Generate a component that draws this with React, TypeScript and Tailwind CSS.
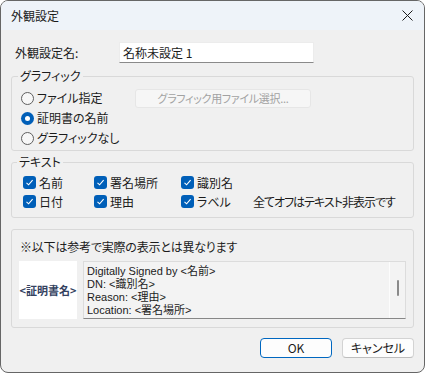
import React from "react";

/* Windows 11 style dialog: appearance settings for a signature stamp. */

const Radio = ({ checked, label }: { checked?: boolean; label: string }) => (
  <label className="flex h-[20px] items-center gap-[3px]">
    {checked ? (
      <span className="flex h-[13px] w-[13px] items-center justify-center rounded-full bg-[#005fb8]">
        <span className="h-[5px] w-[5px] rounded-full bg-white" />
      </span>
    ) : (
      <span className="h-[13px] w-[13px] rounded-full border border-[#5f5f5f] bg-[#f7f7f7]" />
    )}
    <span>{label}</span>
  </label>
);

const Check = ({ label, width }: { label: string; width: string }) => (
  <label className={`flex h-[19px] items-center gap-[3px] ${width}`}>
    <span className="flex h-[13px] w-[13px] items-center justify-center rounded-[3px] bg-[#005fb8]">
      <svg width="9" height="9" viewBox="0 0 9 9" fill="none">
        <path d="M1.5 4.8 L3.6 6.8 L7.6 2.2" stroke="white" strokeWidth="1.1" />
      </svg>
    </span>
    <span>{label}</span>
  </label>
);

const App = () => {
  return (
    <div className="h-[373px] w-[425px] bg-white font-['Noto_Sans_CJK_JP',sans-serif] text-[12px] leading-[16px] text-[#1b1b1b] [font-feature-settings:'palt']">
      <div className="flex h-full flex-col overflow-hidden rounded-[8px] border border-[#666666] bg-[#f0f0f0]">
        {/* Title bar */}
        <div className="flex h-[29px] shrink-0 items-center justify-between bg-[#eef3f9] pl-[10px] pr-[11px]">
          <span>外観設定</span>
          <svg width="11" height="11" viewBox="0 0 11 11" fill="none">
            <path d="M0.5 0.5 L10.5 10.5 M10.5 0.5 L0.5 10.5" stroke="#1b1b1b" strokeWidth="1" />
          </svg>
        </div>

        <div className="flex flex-col px-[10px]">
          {/* Name row */}
          <div className="mt-[12px] flex items-center">
            <span className="ml-[4px] w-[104px]">外観設定名:</span>
            <div className="flex h-[21px] w-[195px] items-center border border-[#ececec] border-b-[#8a8a8a] bg-white pl-[3px]">
              名称未設定 1
            </div>
          </div>

          {/* Graphic group */}
          <fieldset className="mt-[5px] rounded-[3px] border border-[#d9d9d9] pb-[2px] pl-[9px]">
            <legend className="-ml-[3px] px-[2px] leading-[16px]">グラフィック</legend>
            <div className="flex flex-col pt-[4px]">
              <div className="flex items-center">
                <div className="w-[114px]">
                  <Radio label="ファイル指定" />
                </div>
                <div className="flex h-[19px] w-[176px] items-center justify-center rounded-[3px] border border-[#e6e6e6] bg-[#f6f6f6] text-[11px] tracking-[-0.3px] text-[#a2a2a2]">
                  グラフィック用ファイル選択...
                </div>
              </div>
              <Radio checked label="証明書の名前" />
              <Radio label="グラフィックなし" />
            </div>
          </fieldset>

          {/* Text group */}
          <fieldset className="mt-[3px] rounded-[3px] border border-[#d9d9d9] pb-[6px] pl-[11px]">
            <legend className="-ml-[6px] px-[2px] leading-[16px]">テキスト</legend>
            <div className="flex flex-col pt-[3px]">
              <div className="flex">
                <Check label="名前" width="w-[71px]" />
                <Check label="署名場所" width="w-[87px]" />
                <Check label="識別名" width="w-[72px]" />
              </div>
              <div className="flex items-center">
                <Check label="日付" width="w-[71px]" />
                <Check label="理由" width="w-[87px]" />
                <Check label="ラベル" width="w-[72px]" />
                <span className="tracking-[-1px]">全てオフはテキスト非表示です</span>
              </div>
            </div>
          </fieldset>

          {/* Preview group */}
          <div className="mt-[11px] rounded-[3px] border border-[#d9d9d9] px-[7px] pb-[8px] pt-[9px]">
            <div className="ml-[1px] h-[16px] tracking-[-0.2px]">※以下は参考で実際の表示とは異なります</div>
            <div className="mt-[6px] flex h-[58px] gap-[6px]">
              <div className="flex w-[58px] items-center justify-center bg-white text-[11px] font-bold text-[#34425f]">
                &lt;証明書名&gt;
              </div>
              <div className="flex flex-1 border border-[#dcdcdc] border-b-[#878787] bg-[#f3f3f3]">
                <div className="flex-1 pl-[3px] pt-[3px] font-['Liberation_Sans','Noto_Sans_CJK_JP',sans-serif] text-[11px] leading-[13px]">
                  <div>Digitally Signed by &lt;名前&gt;</div>
                  <div>DN: &lt;識別名&gt;</div>
                  <div>Reason: &lt;理由&gt;</div>
                  <div>Location: &lt;署名場所&gt;</div>
                </div>
                <div className="flex w-[16px] justify-center border-l border-[#fcfcfc] pt-[18px]">
                  <div className="h-[16px] w-[2px] rounded-full bg-[#8a8a8a]" />
                </div>
              </div>
            </div>
          </div>

          {/* Dialog buttons */}
          <div className="mt-[10px] flex justify-end gap-[10px]">
            <button className="flex h-[20px] w-[72px] items-center justify-center rounded-[4px] border border-[#0067c0] bg-[#fdfdfd]">
              OK
            </button>
            <button className="flex h-[20px] w-[72px] items-center justify-center rounded-[4px] border border-[#d3d3d3] border-b-[#bdbdbd] bg-[#fdfdfd]">
              キャンセル
            </button>
          </div>
        </div>
      </div>
    </div>
  );
};

export default App;
